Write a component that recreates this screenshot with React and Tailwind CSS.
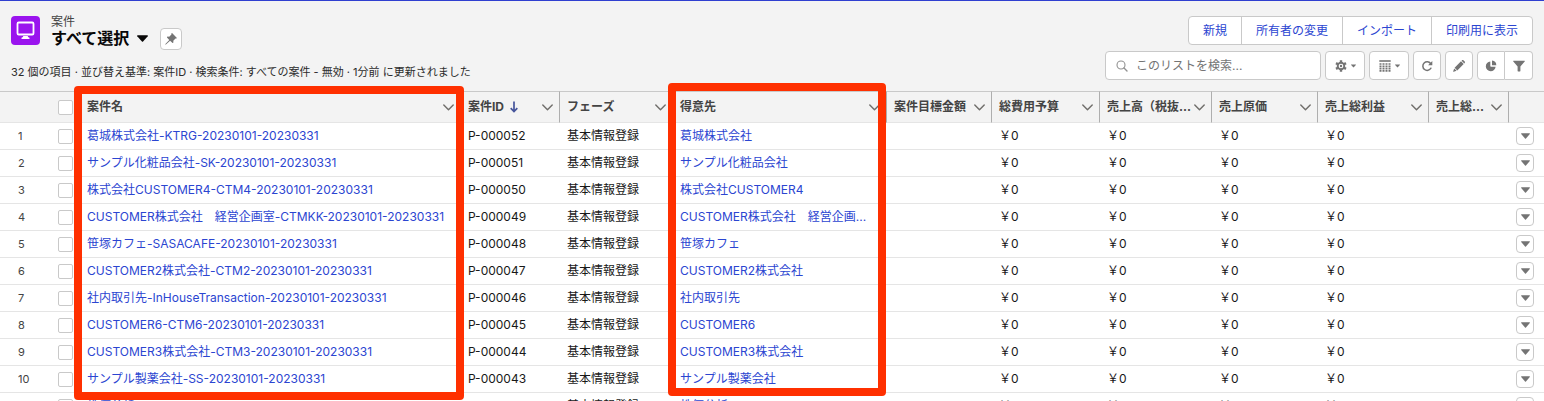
import { useState } from 'react'

const COLUMNS = [
  { key: 'name', label: '案件名', width: 'w-[381px]', link: true, mark: 'first' },
  { key: 'id', label: '案件ID', width: 'w-[99px]', sorted: true },
  { key: 'phase', label: 'フェーズ', width: 'w-[113px]' },
  { key: 'customer', label: '得意先', width: 'w-[214px]', link: true, mark: 'second' },
  { key: 'target', label: '案件目標金額', width: 'w-[105px]' },
  { key: 'budget', label: '総費用予算', width: 'w-[108px]' },
  { key: 'sales', label: '売上高（税抜...', width: 'w-[112px]' },
  { key: 'cost', label: '売上原価', width: 'w-[106px]' },
  { key: 'profit', label: '売上総利益', width: 'w-[111px]' },
  { key: 'rate', label: '売上総...', width: 'w-[80px]' },
]

const PROJECTS = [
  ['葛城株式会社-KTRG-20230101-20230331', 'P-000052', '葛城株式会社'],
  ['サンプル化粧品会社-SK-20230101-20230331', 'P-000051', 'サンプル化粧品会社'],
  ['株式会社CUSTOMER4-CTM4-20230101-20230331', 'P-000050', '株式会社CUSTOMER4'],
  ['CUSTOMER株式会社　経営企画室-CTMKK-20230101-20230331', 'P-000049', 'CUSTOMER株式会社　経営企画...'],
  ['笹塚カフェ-SASACAFE-20230101-20230331', 'P-000048', '笹塚カフェ'],
  ['CUSTOMER2株式会社-CTM2-20230101-20230331', 'P-000047', 'CUSTOMER2株式会社'],
  ['社内取引先-InHouseTransaction-20230101-20230331', 'P-000046', '社内取引先'],
  ['CUSTOMER6-CTM6-20230101-20230331', 'P-000045', 'CUSTOMER6'],
  ['CUSTOMER3株式会社-CTM3-20230101-20230331', 'P-000044', 'CUSTOMER3株式会社'],
  ['サンプル製薬会社-SS-20230101-20230331', 'P-000043', 'サンプル製薬会社'],
  ['株価分析', 'P-000042', '株価分析'],
].map(([name, id, customer]) => ({
  name,
  id,
  customer,
  phase: '基本情報登録',
  budget: '￥0',
  sales: '￥0',
  cost: '￥0',
  profit: '￥0',
}))

const ACTIONS = ['新規', '所有者の変更', 'インポート', '印刷用に表示']

function Caret({ className }) {
  return (
    <svg viewBox="0 0 10 6" className={className} fill="currentColor" aria-hidden="true">
      <path d="M.6 0h8.8c.5 0 .7.5.4.9L5.5 5.7a.7.7 0 0 1-1 0L.2.9C-.1.5.1 0 .6 0z" />
    </svg>
  )
}

function MonitorIcon() {
  return (
    <svg viewBox="0 0 29 29" className="size-full" fill="none" aria-hidden="true">
      <rect x="6.5" y="6.500" width="16" height="12" rx="1.300" stroke="#fff" strokeWidth="1.800" />
      <path d="M12.300 20h4.400l.5 1.300h.5c.5 0 .8.400.8.900v.700h-8v-.7c0-.5.3-.9.800-.9h.5z" fill="#fff" />
    </svg>
  )
}

function PinIcon() {
  return (
    <svg viewBox="0 0 12 12" className="size-3" fill="currentColor" aria-hidden="true">
      <path d="M7.300.3 11.700 4.700c.4.400.1.900-.4.900h-.8L8.300 7.800l.1 1.500c0 .7-.7.900-1.100.5L5.100 7.700.9 11.600c-.3.200-.7-.1-.5-.5L4.300 6.900 2.200 4.700c-.4-.4-.2-1.100.5-1.100l1.500.1L6.400 1.500V.7c0-.5.5-.8.9-.4z" />
    </svg>
  )
}

function SearchIcon() {
  return (
    <svg viewBox="0 0 12 12" className="size-3 shrink-0 text-[#919191]" fill="none" stroke="currentColor" strokeLinecap="round" aria-hidden="true">
      <circle cx="5" cy="5" r="4" strokeWidth="1.1" />
      <path d="m8 8 3 3" strokeWidth="1.4" />
    </svg>
  )
}

function GearIcon() {
  return (
    <svg viewBox="0 0 12 12" className="size-3" fill="none" stroke="currentColor" aria-hidden="true">
      <circle cx="6" cy="6" r="3.3" strokeWidth="1.9" />
      <path d="M6 2.500V.3M6 9.500v2.200M9 4.300l2-1.200M3 7.700 1 8.900M9 7.700l2 1.200M3 4.300 1 3.100" strokeWidth="2.400" />
      <circle cx="6" cy="6" r="1.200" fill="currentColor" stroke="none" />
    </svg>
  )
}

function TableIcon() {
  return (
    <svg viewBox="0 0 12 12" className="size-3" fill="none" stroke="currentColor" aria-hidden="true">
      <path d="M.3 1h11.400" strokeWidth="1.6" />
      <path d="M.5 4h2M3.500 4h2M6.500 4h2M9.500 4h2M.5 6.300h2M3.500 6.300h2M6.500 6.300h2M9.500 6.300h2M.5 8.600h2M3.500 8.600h2M6.500 8.600h2M9.500 8.600h2M.5 10.900h2M3.500 10.900h2M6.500 10.900h2M9.500 10.900h2" strokeWidth="1.700" />
    </svg>
  )
}

function RefreshIcon() {
  return (
    <svg viewBox="0 0 12 12" className="size-3" fill="none" stroke="currentColor" aria-hidden="true">
      <path d="M9.900 8.200A4.300 4.300 0 1 1 9.600 3.500" strokeWidth="1.5" strokeLinecap="round" />
      <path d="M11.300 1v4.200H7.100z" fill="currentColor" stroke="none" />
    </svg>
  )
}

function PencilIcon() {
  return (
    <svg viewBox="0 0 12 12" className="size-3" fill="currentColor" aria-hidden="true">
      <path d="M1.600 7.700 8 1.300l2.700 2.700-6.400 6.400zM8.600.7l.4-.4c.4-.4 1-.4 1.400 0l1.300 1.300c.4.400.4 1 0 1.400l-.4.4zM1.200 8.400l2.400 2.400-2.900 1c-.3.100-.6-.2-.5-.5z" />
    </svg>
  )
}

function ChartIcon() {
  return (
    <svg viewBox="0 0 12 12" className="size-3" fill="currentColor" aria-hidden="true">
      <path d="M5.300 1.500v4.600c0 .4.3.7.700.7h4.600A4.900 4.900 0 1 1 5.300 1.500z" />
      <path d="M7 .5a4.700 4.700 0 0 1 4.300 4.800H7.400a.4.4 0 0 1-.4-.4z" />
    </svg>
  )
}

function FilterIcon() {
  return (
    <svg viewBox="0 0 12 12" className="size-3" fill="currentColor" aria-hidden="true">
      <path d="M.7.700h10.600c.5 0 .7.600.4.900L7.400 6.500v4.400c0 .3-.2.500-.5.500H5.100c-.3 0-.5-.2-.5-.5V6.500L.3 1.600C0 1.300.2.700.7.700z" />
    </svg>
  )
}

function SortArrow() {
  return (
    <svg viewBox="0 0 8 12" className="h-3 w-2" fill="none" stroke="#45549b" strokeWidth="1.7" aria-hidden="true">
      <path d="M4 .5v10M.7 7.200 4 10.500l3.300-3.300" />
    </svg>
  )
}

function Chevron() {
  return (
    <svg viewBox="0 0 11 7" className="h-[7px] w-[11px]" fill="none" stroke="#706e6b" strokeWidth="1.4" strokeLinecap="round" strokeLinejoin="round" aria-hidden="true">
      <path d="m.8.900 4.700 4.900L10.200.9" />
    </svg>
  )
}

function ToolButton({ label, menu, className = 'rounded border', children }) {
  return (
    <button
      type="button"
      aria-label={label}
      className={`flex h-[29px] items-center justify-center gap-1 border-[#c9c9c9] bg-white text-[#747474] ${menu ? 'w-10' : 'w-7'} ${className}`}
    >
      {children}
      {menu && <Caret className="h-1 w-[5px]" />}
    </button>
  )
}

function Checkbox({ label, checked, onChange }) {
  return (
    <input
      type="checkbox"
      aria-label={label}
      checked={checked}
      onChange={onChange}
      className="block size-[15px] appearance-none rounded-xs border border-[#c9c9c9] bg-white checked:bg-[#2b45d1]"
    />
  )
}

export default function App() {
  const [selected, setSelected] = useState([])
  const [keyword, setKeyword] = useState('')

  const toggle = (id) => {
    setSelected((list) => (list.includes(id) ? list.filter((v) => v !== id) : [...list, id]))
  }

  const allSelected = selected.length === PROJECTS.length
  const toggleAll = () => setSelected(allSelected ? [] : PROJECTS.map((p) => p.id))

  return (
    <div className="h-screen overflow-hidden border-t border-[#2f3fd0] bg-white font-['Inter','Noto_Sans_CJK_JP',sans-serif] text-xs text-[#181818]">
      {/* ページヘッダー */}
      <header className="flex justify-between bg-[#f3f3f3] pt-[15px] pr-[11px] pb-[11px] pl-[11px]">
        <div className="flex flex-col justify-between">
          <div className="flex">
            <div className="size-[29px] rounded bg-[#9a14ee]">
              <MonitorIcon />
            </div>
            <div className="ml-[11px]">
              <p className="h-3 leading-3 text-[#444]">案件</p>
              <h1>
                <button type="button" className="flex items-center gap-2 text-base leading-5 font-bold text-[#080707]">
                  すべて選択
                  <Caret className="h-[7px] w-[11px]" />
                </button>
              </h1>
            </div>
            <button
              type="button"
              aria-label="リストビューを固定"
              className="mt-3 ml-3 flex size-[22px] items-center justify-center rounded border border-[#c9c9c9] bg-white text-[#747474]"
            >
              <PinIcon />
            </button>
          </div>
          <p className="text-[11px] leading-4 text-[#2b2b2b]">
            32 個の項目 · 並び替え基準: 案件ID · 検索条件: すべての案件 - 無効 · 1分前 に更新されました
          </p>
        </div>

        <div className="flex flex-col items-end gap-[6px]">
          <div className="flex h-[29px] divide-x divide-[#c9c9c9] overflow-hidden rounded border border-[#c9c9c9] bg-white">
            {ACTIONS.map((label) => (
              <button key={label} type="button" className="px-3.5 text-[#2b45d1]">
                {label}
              </button>
            ))}
          </div>
          <div className="flex gap-1">
            <label className="flex h-[29px] w-[216px] items-center gap-2 rounded border border-[#c9c9c9] bg-white px-2.5">
              <SearchIcon />
              <input
                type="search"
                aria-label="このリストを検索"
                placeholder="このリストを検索..."
                value={keyword}
                onChange={(e) => setKeyword(e.target.value)}
                className="min-w-0 flex-1 bg-transparent outline-none placeholder:text-[#747474]"
              />
            </label>
            <ToolButton label="リストビューコントロール" menu>
              <GearIcon />
            </ToolButton>
            <ToolButton label="表示形式" menu>
              <TableIcon />
            </ToolButton>
            <ToolButton label="更新">
              <RefreshIcon />
            </ToolButton>
            <ToolButton label="編集">
              <PencilIcon />
            </ToolButton>
            <div className="flex">
              <ToolButton label="グラフ" className="rounded-l border">
                <ChartIcon />
              </ToolButton>
              <ToolButton label="検索条件" className="rounded-r border-y border-r">
                <FilterIcon />
              </ToolButton>
            </div>
          </div>
        </div>
      </header>

      {/* 案件一覧 */}
      <table className="w-full table-fixed border-separate border-spacing-0">
        <thead className="bg-[#f3f3f3] text-left text-[#444]">
          <tr className="h-8">
            <th className="w-[50px] border-y border-t-[#c9c9c9] border-b-[#e5e5e5]" aria-label="番号" />
            <th className="w-[30px] border-y border-t-[#c9c9c9] border-b-[#e5e5e5] p-0 pl-2">
              <Checkbox label="すべての行を選択" checked={allSelected} onChange={toggleAll} />
            </th>
            {COLUMNS.map((col) => (
              <th
                key={col.key}
                className={`relative border-y border-r border-t-[#c9c9c9] border-r-[#aeaeae] border-b-[#e5e5e5] p-0 pr-1.5 pl-[7px] font-bold ${col.width}`}
              >
                <div className="flex items-center justify-between">
                  <span className="flex items-center gap-1.5 whitespace-nowrap">
                    {col.label}
                    {col.sorted && <SortArrow />}
                  </span>
                  <Chevron />
                </div>
                {/* 注目列の赤枠 */}
                {col.mark === 'first' && (
                  <span className="pointer-events-none absolute -top-[6px] -right-[4px] -left-[6px] z-10 h-[314px] rounded border-8 border-[#ff3000]" />
                )}
                {col.mark === 'second' && (
                  <span className="pointer-events-none absolute -top-[9px] right-0 -left-[5px] z-10 h-[313px] rounded border-8 border-[#ff3000]" />
                )}
              </th>
            ))}
            <th className="w-[35px] border-y border-t-[#c9c9c9] border-b-[#e5e5e5]" aria-label="操作" />
          </tr>
        </thead>
        <tbody>
          {PROJECTS.map((project, i) => (
            <tr key={project.id} className="h-[27px]">
              <td className="border-b border-[#e5e5e5] p-0 pl-[18px] text-[11px] text-[#444]">{i + 1}</td>
              <td className="border-b border-[#e5e5e5] p-0 pl-2">
                <Checkbox
                  label={`${project.name}を選択`}
                  checked={selected.includes(project.id)}
                  onChange={() => toggle(project.id)}
                />
              </td>
              {COLUMNS.map((col) => (
                <td key={col.key} className="border-b border-[#e5e5e5] p-0 pl-[7px] whitespace-nowrap">
                  {col.link ? (
                    <a href="#" className="text-[#2b45d1] hover:underline">
                      {project[col.key]}
                    </a>
                  ) : (
                    project[col.key]
                  )}
                </td>
              ))}
              <td className="border-b border-[#e5e5e5] p-0 pl-[7px]">
                <button
                  type="button"
                  aria-label="アクションを表示"
                  className="flex size-[18px] items-center justify-center rounded border border-[#c9c9c9] bg-white text-[#747474]"
                >
                  <Caret className="h-[6px] w-[9px]" />
                </button>
              </td>
            </tr>
          ))}
        </tbody>
      </table>
    </div>
  )
}
